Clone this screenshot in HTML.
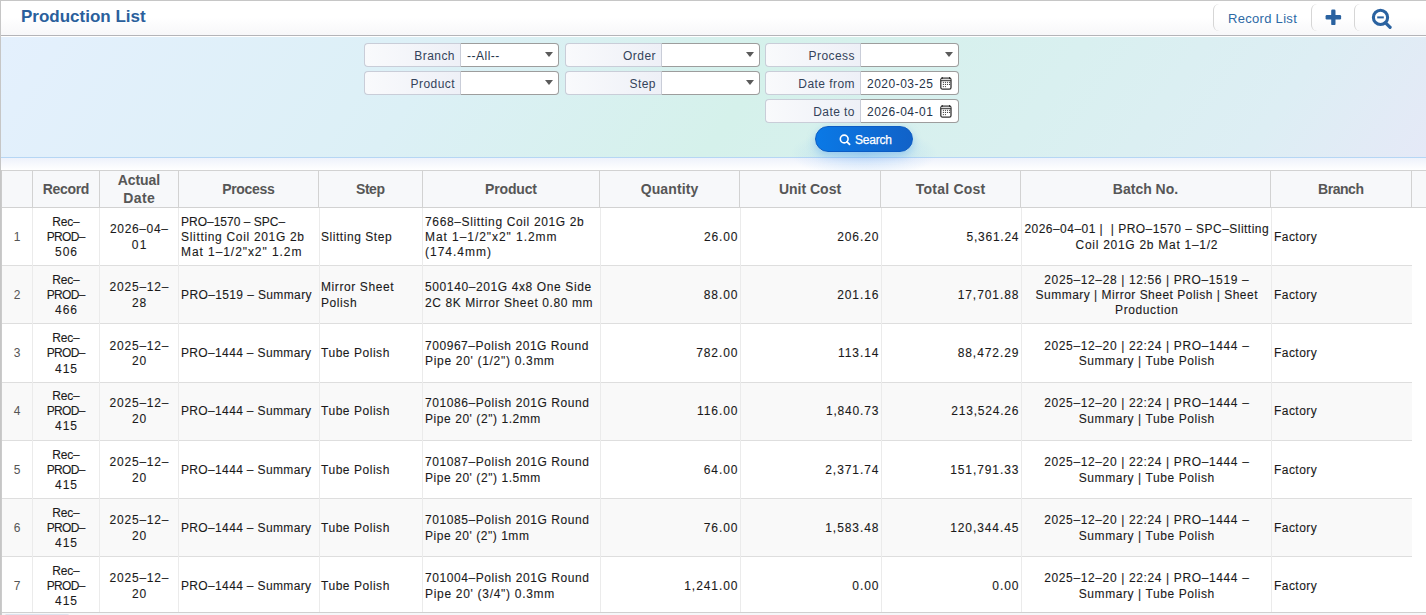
<!DOCTYPE html><html><head><meta charset="utf-8"><style>*{box-sizing:border-box}
html,body{margin:0;padding:0}
body{width:1426px;height:615px;overflow:hidden;position:relative;background:#fff;font-family:"Liberation Sans",sans-serif;}
div{position:absolute}
.c>div,.hc>div{position:static}
.frame{left:0;top:0;width:1426px;height:615px;border-left:1px solid #c6c6c6;border-top:1px solid #c6c6c6;}
.hdr{left:1px;top:1px;width:1425px;height:34px;background:linear-gradient(#fff,#fff 50%,#f7f7f9);}
.hdrb{left:1px;top:35px;width:1425px;height:1px;background:#b4b4b8;}
.title{left:21px;top:7px;font-size:17px;font-weight:bold;color:#2a5f9c;white-space:nowrap}
.band{left:1px;top:37px;width:1425px;height:120px;background:linear-gradient(125deg,#e4f0fd 0%,#dcf0f6 30%,#d5f1eb 52%,#d9f0f0 72%,#ddeef4 88%,#e5e9f7 100%);}
.bandb{left:1px;top:157px;width:1425px;height:1px;background:#b6d6f4;}
.shadow{left:1px;top:158px;width:1425px;height:12px;background:linear-gradient(#eef2fb,#fff);}
.lbl{height:24px;border:1px solid #c9cdd8;border-right:none;border-radius:4px 0 0 4px;background:linear-gradient(90deg,#f9fafc,#eef0f7);font-size:12px;color:#34435a;text-align:right;padding-right:5px;letter-spacing:.45px;padding-top:1px;line-height:22px;white-space:nowrap}
.inp{height:24px;width:99px;border:1px solid #9d9d9d;border-left-color:#c9cdd8;border-radius:0 4px 4px 0;background:#fff;font-size:12px;color:#26344a;line-height:22px;padding-left:6px;letter-spacing:.5px;padding-top:1px;white-space:nowrap}
.arr{position:absolute;right:5.5px;top:8px;width:0;height:0;border-left:4.8px solid transparent;border-right:4.8px solid transparent;border-top:5px solid #5a5a5a}
.btn{left:815px;top:126px;width:98px;height:26px;border-radius:13px;border:1px solid #0b5cc4;background:linear-gradient(90deg,#0a79e6,#1162c8);box-shadow:0 3px 8px rgba(60,150,240,.35);color:#fff;font-size:12px;line-height:26px;padding-top:0}
.sep{top:4px;width:6px;height:27px;border-left:1px solid #d6d6d6;border-radius:6px 0 0 6px}
.rl{left:1228px;top:11px;font-size:13px;color:#2d69a5;white-space:nowrap;line-height:16px;letter-spacing:.3px}
.ico{position:absolute}
.cal{position:absolute;left:79px;top:4px}
.hbg{left:2px;top:171px;width:1424px;height:36px;background:#f7f8fa}
.htop{left:2px;top:170px;width:1424px;height:1px;background:#d2d2d2}
.hbot{left:2px;top:207px;width:1424px;height:1px;background:#d2d2d2}
.tleft{left:1px;top:170px;width:1px;height:445px;background:#cbcbcb}
.vlh{top:171px;width:1px;height:36px;background:#d2d2d2}
.hc{top:172px;height:36px;display:flex;align-items:center;justify-content:center;text-align:center;font-size:14px;font-weight:bold;color:#565656;line-height:17.8px;white-space:nowrap}
.rw{left:2px;width:1410px}
.rw.odd{background:#fff}
.rw.even{background:#f9f9f9}
.vl{top:208px;width:1px;height:405px;background:#ebebeb}
.hl{left:2px;width:1410px;height:1px;background:#dedede}
.c{display:flex;align-items:center;padding-top:2px;font-size:12px;color:#1a1a1a;-webkit-text-stroke:.1px #1a1a1a;line-height:15.25px;white-space:nowrap}
.c.ac{justify-content:center;text-align:center}
.c.al{justify-content:flex-start;padding-left:2px}
.c.ar{justify-content:flex-end;padding-right:2.5px}

.bbot{left:2px;top:612px;width:1424px;height:1px;background:#d0d0d0}
.sbar{left:2px;top:613px;width:1424px;height:2px;background:#f6f7f9}
.thumb{left:5px;top:613.5px;width:64px;height:3px;border-radius:2px;background:#dde3ee}
.c.st{padding-left:1px}
.c.rn{color:#555;-webkit-text-stroke:0}
.glow{left:790px;top:128px;width:148px;height:46px;background:radial-gradient(ellipse at 50% 55%,rgba(110,175,245,.33),rgba(110,175,245,0) 70%)}
</style></head><body>
<div class="frame"></div>
<div class="hdr"></div>
<div class="hdrb"></div>
<div class="title">Production List</div>
<div class="sep" style="left:1213px"></div>
<div class="sep" style="left:1311px"></div>
<div class="sep" style="left:1354px"></div>
<div class="rl">Record List</div>
<svg class="ico" style="left:1325px;top:9px" width="17" height="17" viewBox="0 0 17 17"><rect x="0.6" y="6.1" width="15.5" height="4.3" rx="1.2" fill="#2a62a0"/><rect x="6.2" y="0.6" width="4.3" height="15.5" rx="1.2" fill="#2a62a0"/></svg>
<svg class="ico" style="left:1370px;top:8px" width="24" height="22" viewBox="0 0 24 22"><circle cx="10.5" cy="9.4" r="7.1" stroke="#2a62a0" stroke-width="3.1" fill="none"/><path d="M7.2 9.4h6.6" stroke="#2a62a0" stroke-width="2"/><path d="M15.6 14.8l4.5 4.5" stroke="#2a62a0" stroke-width="3.2" stroke-linecap="round"/></svg>
<div class="band"></div>
<div class="bandb"></div>
<div class="shadow"></div>
<div class="lbl" style="left:364px;top:43px;width:96px">Branch</div><div class="inp" style="left:460px;top:43px">--All--<i class="arr"></i></div>
<div class="lbl" style="left:565px;top:43px;width:96px">Order</div><div class="inp" style="left:661px;top:43px"><i class="arr"></i></div>
<div class="lbl" style="left:765px;top:43px;width:95px">Process</div><div class="inp" style="left:860px;top:43px"><i class="arr"></i></div>
<div class="lbl" style="left:364px;top:71px;width:96px">Product</div><div class="inp" style="left:460px;top:71px"><i class="arr"></i></div>
<div class="lbl" style="left:565px;top:71px;width:96px">Step</div><div class="inp" style="left:661px;top:71px"><i class="arr"></i></div>
<div class="lbl" style="left:765px;top:71px;width:95px">Date from</div><div class="inp" style="left:860px;top:71px">2020-03-25<svg class="cal" width="12" height="14" viewBox="0 0 12 14"><rect x="0.8" y="2.2" width="10.2" height="10.9" rx="1.6" fill="#fff" stroke="#333" stroke-width="1.3"/><rect x="1.5" y="2.9" width="8.8" height="1.6" fill="#ddd"/><path d="M0.8 4.7h10.2" stroke="#333" stroke-width="1"/><path d="M2.2 1v2M9.6 1v2" stroke="#333" stroke-width="1.2"/><g fill="#444"><circle cx="3.40" cy="6.30" r=".62"/><circle cx="5.45" cy="6.30" r=".62"/><circle cx="7.50" cy="6.30" r=".62"/><circle cx="9.55" cy="6.30" r=".62"/><circle cx="3.40" cy="8.45" r=".62"/><circle cx="5.45" cy="8.45" r=".62"/><circle cx="7.50" cy="8.45" r=".62"/><circle cx="9.55" cy="8.45" r=".62"/><circle cx="3.40" cy="10.60" r=".62"/><circle cx="5.45" cy="10.60" r=".62"/></g></svg></div>
<div class="lbl" style="left:765px;top:99px;width:95px">Date to</div><div class="inp" style="left:860px;top:99px">2026-04-01<svg class="cal" width="12" height="14" viewBox="0 0 12 14"><rect x="0.8" y="2.2" width="10.2" height="10.9" rx="1.6" fill="#fff" stroke="#333" stroke-width="1.3"/><rect x="1.5" y="2.9" width="8.8" height="1.6" fill="#ddd"/><path d="M0.8 4.7h10.2" stroke="#333" stroke-width="1"/><path d="M2.2 1v2M9.6 1v2" stroke="#333" stroke-width="1.2"/><g fill="#444"><circle cx="3.40" cy="6.30" r=".62"/><circle cx="5.45" cy="6.30" r=".62"/><circle cx="7.50" cy="6.30" r=".62"/><circle cx="9.55" cy="6.30" r=".62"/><circle cx="3.40" cy="8.45" r=".62"/><circle cx="5.45" cy="8.45" r=".62"/><circle cx="7.50" cy="8.45" r=".62"/><circle cx="9.55" cy="8.45" r=".62"/><circle cx="3.40" cy="10.60" r=".62"/><circle cx="5.45" cy="10.60" r=".62"/></g></svg></div>
<div class="glow"></div><div class="btn"><svg style="position:absolute;left:23px;top:7px" width="12" height="12" viewBox="0 0 12 12"><circle cx="5.2" cy="5" r="3.9" stroke="#fff" stroke-width="1.6" fill="none"/><path d="M8 7.8l2.6 2.6" stroke="#fff" stroke-width="1.8" stroke-linecap="round"/></svg><span style="position:absolute;left:39px;top:0px;letter-spacing:-.2px;-webkit-text-stroke:.25px #fff">Search</span></div>

<div class="hbg"></div><div class="htop"></div><div class="hbot"></div><div class="tleft"></div>
<div class="vlh" style="left:32px"></div>
<div class="vlh" style="left:99px"></div>
<div class="vlh" style="left:178px"></div>
<div class="vlh" style="left:318px"></div>
<div class="vlh" style="left:422px"></div>
<div class="vlh" style="left:599px"></div>
<div class="vlh" style="left:739px"></div>
<div class="vlh" style="left:880px"></div>
<div class="vlh" style="left:1020px"></div>
<div class="vlh" style="left:1270px"></div>
<div class="vlh" style="left:1411px"></div>
<div class="hc" style="left:33px;width:66px"><div><span style="letter-spacing:-0.32px;margin-right:0.32px">Record</span></div></div>
<div class="hc" style="left:100px;width:78px"><div><span style="letter-spacing:-0.10px;margin-right:0.10px">Actual</span><br><span style="letter-spacing:0.37px;margin-right:-0.37px">Date</span></div></div>
<div class="hc" style="left:179px;width:139px"><div><span style="letter-spacing:-0.33px;margin-right:0.33px">Process</span></div></div>
<div class="hc" style="left:319px;width:103px"><div><span style="letter-spacing:-0.47px;margin-right:0.47px">Step</span></div></div>
<div class="hc" style="left:423px;width:176px"><div><span style="letter-spacing:-0.17px;margin-right:0.17px">Product</span></div></div>
<div class="hc" style="left:600px;width:139px"><div><span style="letter-spacing:0.13px;margin-right:-0.13px">Quantity</span></div></div>
<div class="hc" style="left:740px;width:140px"><div><span>Unit Cost</span></div></div>
<div class="hc" style="left:881px;width:139px"><div><span style="letter-spacing:0.22px;margin-right:-0.22px">Total Cost</span></div></div>
<div class="hc" style="left:1021px;width:249px"><div><span>Batch No.</span></div></div>
<div class="hc" style="left:1271px;width:140px"><div><span style="letter-spacing:-0.46px;margin-right:0.46px">Branch</span></div></div>
<div class="rw odd" style="top:208px;height:57px"></div>
<div class="hl" style="top:265px"></div>
<div class="rw even" style="top:266px;height:57px"></div>
<div class="hl" style="top:323px"></div>
<div class="rw odd" style="top:324px;height:58px"></div>
<div class="hl" style="top:382px"></div>
<div class="rw even" style="top:383px;height:57px"></div>
<div class="hl" style="top:440px"></div>
<div class="rw odd" style="top:441px;height:57px"></div>
<div class="hl" style="top:498px"></div>
<div class="rw even" style="top:499px;height:57px"></div>
<div class="hl" style="top:556px"></div>
<div class="rw odd" style="top:557px;height:55px"></div>
<div class="hl" style="top:612px"></div>
<div class="vl" style="left:32px"></div>
<div class="vl" style="left:99px"></div>
<div class="vl" style="left:178px"></div>
<div class="vl" style="left:319px"></div>
<div class="vl" style="left:422px"></div>
<div class="vl" style="left:600px"></div>
<div class="vl" style="left:740px"></div>
<div class="vl" style="left:881px"></div>
<div class="vl" style="left:1021px"></div>
<div class="vl" style="left:1271px"></div>
<div class="c ac rn" style="left:2px;top:208px;width:30px;height:57px"><div><span>1</span></div></div>
<div class="c ac" style="left:33px;top:208px;width:66px;height:57px"><div><span style="letter-spacing:-0.17px;margin-right:0.17px">Rec–</span><br><span style="letter-spacing:-0.68px;margin-right:0.68px">PROD–</span><br><span style="letter-spacing:0.95px;margin-right:-0.95px">506</span></div></div>
<div class="c ac" style="left:100px;top:208px;width:78px;height:57px"><div><span style="letter-spacing:0.64px;margin-right:-0.64px">2026–04–</span><br><span style="letter-spacing:1.30px;margin-right:-1.30px">01</span></div></div>
<div class="c al" style="left:179px;top:208px;width:140px;height:57px"><div><span>PRO–1570 – SPC–</span><br><span style="letter-spacing:0.68px;margin-right:-0.68px">Slitting Coil 201G 2b</span><br><span style="letter-spacing:0.93px;margin-right:-0.93px">Mat 1–1/2"x2" 1.2m</span></div></div>
<div class="c al st" style="left:320px;top:208px;width:102px;height:57px"><div><span style="letter-spacing:0.55px;margin-right:-0.55px">Slitting Step</span></div></div>
<div class="c al" style="left:423px;top:208px;width:177px;height:57px"><div><span style="letter-spacing:0.64px;margin-right:-0.64px">7668–Slitting Coil 201G 2b</span><br><span style="letter-spacing:0.94px;margin-right:-0.94px">Mat 1–1/2"x2" 1.2mm</span><br><span style="letter-spacing:0.99px;margin-right:-0.99px">(174.4mm)</span></div></div>
<div class="c ar" style="left:601px;top:208px;width:139px;height:57px"><div><span style="letter-spacing:0.88px;margin-right:-0.88px">26.00</span></div></div>
<div class="c ar" style="left:741px;top:208px;width:140px;height:57px"><div><span style="letter-spacing:0.92px;margin-right:-0.92px">206.20</span></div></div>
<div class="c ar" style="left:882px;top:208px;width:139px;height:57px"><div><span style="letter-spacing:0.74px;margin-right:-0.74px">5,361.24</span></div></div>
<div class="c ac" style="left:1022px;top:208px;width:249px;height:57px"><div><span style="letter-spacing:0.47px;margin-right:-0.47px">2026–04–01 | &nbsp;| PRO–1570 – SPC–Slitting</span><br><span style="letter-spacing:0.72px;margin-right:-0.72px">Coil 201G 2b Mat 1–1/2</span></div></div>
<div class="c al" style="left:1272px;top:208px;width:140px;height:57px"><div><span style="letter-spacing:0.45px;margin-right:-0.45px">Factory</span></div></div>
<div class="c ac rn" style="left:2px;top:266px;width:30px;height:57px"><div><span>2</span></div></div>
<div class="c ac" style="left:33px;top:266px;width:66px;height:57px"><div><span style="letter-spacing:-0.17px;margin-right:0.17px">Rec–</span><br><span style="letter-spacing:-0.68px;margin-right:0.68px">PROD–</span><br><span style="letter-spacing:0.87px;margin-right:-0.87px">466</span></div></div>
<div class="c ac" style="left:100px;top:266px;width:78px;height:57px"><div><span style="letter-spacing:0.79px;margin-right:-0.79px">2025–12–</span><br><span style="letter-spacing:0.87px;margin-right:-0.87px">28</span></div></div>
<div class="c al" style="left:179px;top:266px;width:140px;height:57px"><div><span style="letter-spacing:0.38px;margin-right:-0.38px">PRO–1519 – Summary</span></div></div>
<div class="c al st" style="left:320px;top:266px;width:102px;height:57px"><div><span style="letter-spacing:0.59px;margin-right:-0.59px">Mirror Sheet</span><br><span style="letter-spacing:0.58px;margin-right:-0.58px">Polish</span></div></div>
<div class="c al" style="left:423px;top:266px;width:177px;height:57px"><div><span style="letter-spacing:0.61px;margin-right:-0.61px">500140–201G 4x8 One Side</span><br><span style="letter-spacing:0.59px;margin-right:-0.59px">2C 8K Mirror Sheet 0.80 mm</span></div></div>
<div class="c ar" style="left:601px;top:266px;width:139px;height:57px"><div><span style="letter-spacing:0.93px;margin-right:-0.93px">88.00</span></div></div>
<div class="c ar" style="left:741px;top:266px;width:140px;height:57px"><div><span style="letter-spacing:0.92px;margin-right:-0.92px">201.16</span></div></div>
<div class="c ar" style="left:882px;top:266px;width:139px;height:57px"><div><span style="letter-spacing:0.93px;margin-right:-0.93px">17,701.88</span></div></div>
<div class="c ac" style="left:1022px;top:266px;width:249px;height:57px"><div><span style="letter-spacing:0.62px;margin-right:-0.62px">2025–12–28 | 12:56 | PRO–1519 –</span><br><span style="letter-spacing:0.49px;margin-right:-0.49px">Summary | Mirror Sheet Polish | Sheet</span><br><span style="letter-spacing:0.60px;margin-right:-0.60px">Production</span></div></div>
<div class="c al" style="left:1272px;top:266px;width:140px;height:57px"><div><span style="letter-spacing:0.45px;margin-right:-0.45px">Factory</span></div></div>
<div class="c ac rn" style="left:2px;top:324px;width:30px;height:58px"><div><span>3</span></div></div>
<div class="c ac" style="left:33px;top:324px;width:66px;height:58px"><div><span style="letter-spacing:-0.17px;margin-right:0.17px">Rec–</span><br><span style="letter-spacing:-0.68px;margin-right:0.68px">PROD–</span><br><span style="letter-spacing:0.87px;margin-right:-0.87px">415</span></div></div>
<div class="c ac" style="left:100px;top:324px;width:78px;height:58px"><div><span style="letter-spacing:0.79px;margin-right:-0.79px">2025–12–</span><br><span style="letter-spacing:0.87px;margin-right:-0.87px">20</span></div></div>
<div class="c al" style="left:179px;top:324px;width:140px;height:58px"><div><span style="letter-spacing:0.35px;margin-right:-0.35px">PRO–1444 – Summary</span></div></div>
<div class="c al st" style="left:320px;top:324px;width:102px;height:58px"><div><span style="letter-spacing:0.54px;margin-right:-0.54px">Tube Polish</span></div></div>
<div class="c al" style="left:423px;top:324px;width:177px;height:58px"><div><span style="letter-spacing:0.55px;margin-right:-0.55px">700967–Polish 201G Round</span><br><span style="letter-spacing:0.69px;margin-right:-0.69px">Pipe 20' (1/2") 0.3mm</span></div></div>
<div class="c ar" style="left:601px;top:324px;width:139px;height:58px"><div><span style="letter-spacing:0.92px;margin-right:-0.92px">782.00</span></div></div>
<div class="c ar" style="left:741px;top:324px;width:140px;height:58px"><div><span style="letter-spacing:0.92px;margin-right:-0.92px">113.14</span></div></div>
<div class="c ar" style="left:882px;top:324px;width:139px;height:58px"><div><span style="letter-spacing:0.93px;margin-right:-0.93px">88,472.29</span></div></div>
<div class="c ac" style="left:1022px;top:324px;width:249px;height:58px"><div><span style="letter-spacing:0.63px;margin-right:-0.63px">2025–12–20 | 22:24 | PRO–1444 –</span><br><span style="letter-spacing:0.58px;margin-right:-0.58px">Summary | Tube Polish</span></div></div>
<div class="c al" style="left:1272px;top:324px;width:140px;height:58px"><div><span style="letter-spacing:0.45px;margin-right:-0.45px">Factory</span></div></div>
<div class="c ac rn" style="left:2px;top:383px;width:30px;height:55px"><div><span>4</span></div></div>
<div class="c ac" style="left:33px;top:383px;width:66px;height:55px"><div><span style="letter-spacing:-0.17px;margin-right:0.17px">Rec–</span><br><span style="letter-spacing:-0.68px;margin-right:0.68px">PROD–</span><br><span style="letter-spacing:0.87px;margin-right:-0.87px">415</span></div></div>
<div class="c ac" style="left:100px;top:383px;width:78px;height:55px"><div><span style="letter-spacing:0.79px;margin-right:-0.79px">2025–12–</span><br><span style="letter-spacing:0.87px;margin-right:-0.87px">20</span></div></div>
<div class="c al" style="left:179px;top:383px;width:140px;height:55px"><div><span style="letter-spacing:0.35px;margin-right:-0.35px">PRO–1444 – Summary</span></div></div>
<div class="c al st" style="left:320px;top:383px;width:102px;height:55px"><div><span style="letter-spacing:0.54px;margin-right:-0.54px">Tube Polish</span></div></div>
<div class="c al" style="left:423px;top:383px;width:177px;height:55px"><div><span style="letter-spacing:0.57px;margin-right:-0.57px">701086–Polish 201G Round</span><br><span style="letter-spacing:0.56px;margin-right:-0.56px">Pipe 20' (2") 1.2mm</span></div></div>
<div class="c ar" style="left:601px;top:383px;width:139px;height:55px"><div><span style="letter-spacing:0.92px;margin-right:-0.92px">116.00</span></div></div>
<div class="c ar" style="left:741px;top:383px;width:140px;height:55px"><div><span style="letter-spacing:0.84px;margin-right:-0.84px">1,840.73</span></div></div>
<div class="c ar" style="left:882px;top:383px;width:139px;height:55px"><div><span style="letter-spacing:0.80px;margin-right:-0.80px">213,524.26</span></div></div>
<div class="c ac" style="left:1022px;top:383px;width:249px;height:55px"><div><span style="letter-spacing:0.63px;margin-right:-0.63px">2025–12–20 | 22:24 | PRO–1444 –</span><br><span style="letter-spacing:0.58px;margin-right:-0.58px">Summary | Tube Polish</span></div></div>
<div class="c al" style="left:1272px;top:383px;width:140px;height:55px"><div><span style="letter-spacing:0.45px;margin-right:-0.45px">Factory</span></div></div>
<div class="c ac rn" style="left:2px;top:441px;width:30px;height:57px"><div><span>5</span></div></div>
<div class="c ac" style="left:33px;top:441px;width:66px;height:57px"><div><span style="letter-spacing:-0.17px;margin-right:0.17px">Rec–</span><br><span style="letter-spacing:-0.68px;margin-right:0.68px">PROD–</span><br><span style="letter-spacing:0.87px;margin-right:-0.87px">415</span></div></div>
<div class="c ac" style="left:100px;top:441px;width:78px;height:57px"><div><span style="letter-spacing:0.79px;margin-right:-0.79px">2025–12–</span><br><span style="letter-spacing:0.87px;margin-right:-0.87px">20</span></div></div>
<div class="c al" style="left:179px;top:441px;width:140px;height:57px"><div><span style="letter-spacing:0.35px;margin-right:-0.35px">PRO–1444 – Summary</span></div></div>
<div class="c al st" style="left:320px;top:441px;width:102px;height:57px"><div><span style="letter-spacing:0.54px;margin-right:-0.54px">Tube Polish</span></div></div>
<div class="c al" style="left:423px;top:441px;width:177px;height:57px"><div><span style="letter-spacing:0.57px;margin-right:-0.57px">701087–Polish 201G Round</span><br><span style="letter-spacing:0.56px;margin-right:-0.56px">Pipe 20' (2") 1.5mm</span></div></div>
<div class="c ar" style="left:601px;top:441px;width:139px;height:57px"><div><span style="letter-spacing:0.93px;margin-right:-0.93px">64.00</span></div></div>
<div class="c ar" style="left:741px;top:441px;width:140px;height:57px"><div><span style="letter-spacing:0.93px;margin-right:-0.93px">2,371.74</span></div></div>
<div class="c ar" style="left:882px;top:441px;width:139px;height:57px"><div><span style="letter-spacing:0.92px;margin-right:-0.92px">151,791.33</span></div></div>
<div class="c ac" style="left:1022px;top:441px;width:249px;height:57px"><div><span style="letter-spacing:0.63px;margin-right:-0.63px">2025–12–20 | 22:24 | PRO–1444 –</span><br><span style="letter-spacing:0.58px;margin-right:-0.58px">Summary | Tube Polish</span></div></div>
<div class="c al" style="left:1272px;top:441px;width:140px;height:57px"><div><span style="letter-spacing:0.45px;margin-right:-0.45px">Factory</span></div></div>
<div class="c ac rn" style="left:2px;top:499px;width:30px;height:57px"><div><span>6</span></div></div>
<div class="c ac" style="left:33px;top:499px;width:66px;height:57px"><div><span style="letter-spacing:-0.17px;margin-right:0.17px">Rec–</span><br><span style="letter-spacing:-0.68px;margin-right:0.68px">PROD–</span><br><span style="letter-spacing:0.87px;margin-right:-0.87px">415</span></div></div>
<div class="c ac" style="left:100px;top:499px;width:78px;height:57px"><div><span style="letter-spacing:0.79px;margin-right:-0.79px">2025–12–</span><br><span style="letter-spacing:0.87px;margin-right:-0.87px">20</span></div></div>
<div class="c al" style="left:179px;top:499px;width:140px;height:57px"><div><span style="letter-spacing:0.35px;margin-right:-0.35px">PRO–1444 – Summary</span></div></div>
<div class="c al st" style="left:320px;top:499px;width:102px;height:57px"><div><span style="letter-spacing:0.54px;margin-right:-0.54px">Tube Polish</span></div></div>
<div class="c al" style="left:423px;top:499px;width:177px;height:57px"><div><span style="letter-spacing:0.57px;margin-right:-0.57px">701085–Polish 201G Round</span><br><span style="letter-spacing:0.54px;margin-right:-0.54px">Pipe 20' (2") 1mm</span></div></div>
<div class="c ar" style="left:601px;top:499px;width:139px;height:57px"><div><span style="letter-spacing:0.93px;margin-right:-0.93px">76.00</span></div></div>
<div class="c ar" style="left:741px;top:499px;width:140px;height:57px"><div><span style="letter-spacing:0.93px;margin-right:-0.93px">1,583.48</span></div></div>
<div class="c ar" style="left:882px;top:499px;width:139px;height:57px"><div><span style="letter-spacing:0.92px;margin-right:-0.92px">120,344.45</span></div></div>
<div class="c ac" style="left:1022px;top:499px;width:249px;height:57px"><div><span style="letter-spacing:0.63px;margin-right:-0.63px">2025–12–20 | 22:24 | PRO–1444 –</span><br><span style="letter-spacing:0.58px;margin-right:-0.58px">Summary | Tube Polish</span></div></div>
<div class="c al" style="left:1272px;top:499px;width:140px;height:57px"><div><span style="letter-spacing:0.45px;margin-right:-0.45px">Factory</span></div></div>
<div class="c ac rn" style="left:2px;top:557px;width:30px;height:57px"><div><span>7</span></div></div>
<div class="c ac" style="left:33px;top:557px;width:66px;height:57px"><div><span style="letter-spacing:-0.17px;margin-right:0.17px">Rec–</span><br><span style="letter-spacing:-0.68px;margin-right:0.68px">PROD–</span><br><span style="letter-spacing:0.87px;margin-right:-0.87px">415</span></div></div>
<div class="c ac" style="left:100px;top:557px;width:78px;height:57px"><div><span style="letter-spacing:0.79px;margin-right:-0.79px">2025–12–</span><br><span style="letter-spacing:0.87px;margin-right:-0.87px">20</span></div></div>
<div class="c al" style="left:179px;top:557px;width:140px;height:57px"><div><span style="letter-spacing:0.35px;margin-right:-0.35px">PRO–1444 – Summary</span></div></div>
<div class="c al st" style="left:320px;top:557px;width:102px;height:57px"><div><span style="letter-spacing:0.54px;margin-right:-0.54px">Tube Polish</span></div></div>
<div class="c al" style="left:423px;top:557px;width:177px;height:57px"><div><span style="letter-spacing:0.57px;margin-right:-0.57px">701004–Polish 201G Round</span><br><span style="letter-spacing:0.70px;margin-right:-0.70px">Pipe 20' (3/4") 0.3mm</span></div></div>
<div class="c ar" style="left:601px;top:557px;width:139px;height:57px"><div><span style="letter-spacing:0.93px;margin-right:-0.93px">1,241.00</span></div></div>
<div class="c ar" style="left:741px;top:557px;width:140px;height:57px"><div><span style="letter-spacing:0.94px;margin-right:-0.94px">0.00</span></div></div>
<div class="c ar" style="left:882px;top:557px;width:139px;height:57px"><div><span style="letter-spacing:0.94px;margin-right:-0.94px">0.00</span></div></div>
<div class="c ac" style="left:1022px;top:557px;width:249px;height:57px"><div><span style="letter-spacing:0.63px;margin-right:-0.63px">2025–12–20 | 22:24 | PRO–1444 –</span><br><span style="letter-spacing:0.58px;margin-right:-0.58px">Summary | Tube Polish</span></div></div>
<div class="c al" style="left:1272px;top:557px;width:140px;height:57px"><div><span style="letter-spacing:0.45px;margin-right:-0.45px">Factory</span></div></div>
<div class="bbot"></div><div class="sbar"></div><div class="thumb"></div>
</body></html>
